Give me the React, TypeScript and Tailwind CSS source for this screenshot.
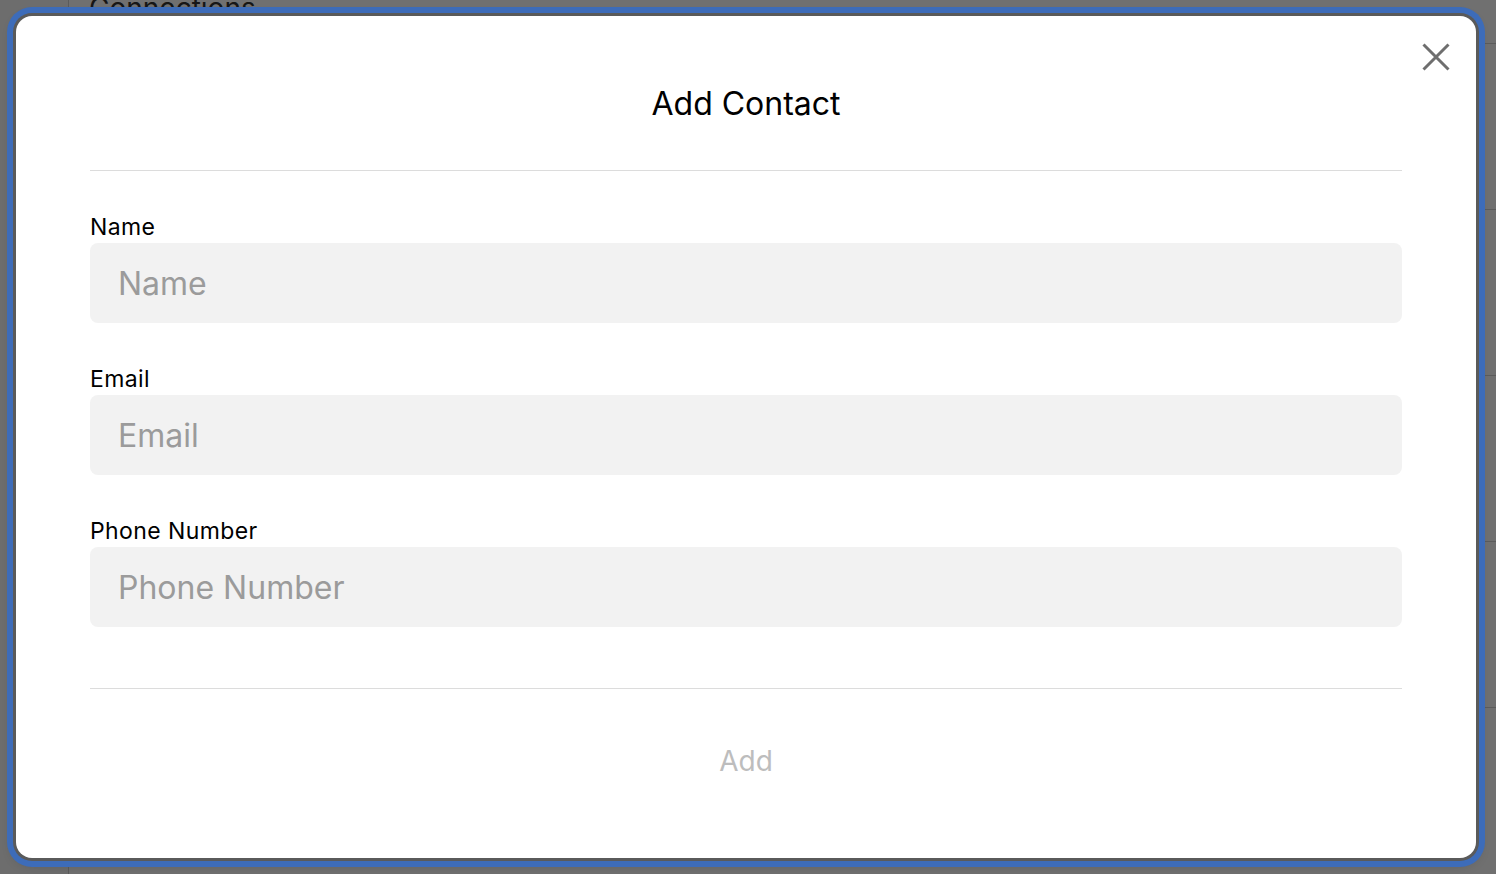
const fields = ['Name', 'Email', 'Phone Number'];

function Field({ label }: { label: string }) {
  return (
    <div className="flex flex-col gap-[5px]">
      <label className="translate-y-[1px] text-[23px] leading-[24px] tracking-[0.4px] text-black">{label}</label>
      <input
        placeholder={label}
        className="h-[80px] w-full rounded-[8px] bg-[#f2f2f2] px-[28px] text-[32px] text-black outline-none placeholder:text-[#9b9b9b]"
      />
    </div>
  );
}

export default function App() {
  return (
    <div
      className="relative h-[874px] w-full overflow-hidden bg-white"
      style={{ fontFamily: 'Inter, "Noto Sans", sans-serif' }}
    >
      {/* page behind the dialog */}
      <div className="flex h-full">
        <aside className="w-[69px] shrink-0 border-r border-[#cfcfcf] bg-[#f8f8f8]" />
        <main className="flex flex-1 flex-col">
          <h1 className="-mt-[13px] ml-[20px] text-[28px] leading-[42px] text-[#333]">Connections</h1>
          <div className="mt-[14px] flex flex-col">
            {[0, 1, 2, 3, 4].map((i) => (
              <div key={i} className="h-[166px] border-t border-[#d2d2d2]" />
            ))}
          </div>
        </main>
      </div>

      {/* overlay */}
      <div className="absolute inset-0 bg-black/[0.56]" />

      {/* dialog */}
      <div className="absolute left-[16px] top-[16px] flex h-[842px] w-[1460px] flex-col rounded-[16px] bg-white px-[74px] shadow-[0_0_0_3px_#5a5a5a,0_0_0_9px_#3d6cb9,0_4px_14px_rgba(0,0,0,0.3)]">
        <button className="absolute right-[26px] top-[27px] flex h-[28px] w-[28px] items-center justify-center text-[#6e6e6e]">
          <svg viewBox="0 0 28 28" className="h-[28px] w-[28px]" fill="none" stroke="currentColor" strokeWidth={3} strokeLinecap="butt">
            <path d="M1.5 1.5 L26.5 26.5 M26.5 1.5 L1.5 26.5" />
          </svg>
        </button>

        <div className="flex h-[155px] items-start justify-center border-b border-[#dcdcdc] pt-[68px]">
          <h2 className="text-[32px] leading-[40px] text-black">Add Contact</h2>
        </div>

        <div className="flex flex-col gap-[43px] pt-[43px]">
          {fields.map((f) => (
            <Field key={f} label={f} />
          ))}
        </div>

        <div className="mt-[61px] border-t border-[#dcdcdc]" />

        <div className="flex justify-center pt-[52px]">
          <button className="h-[40px] text-[28px] leading-[40px] text-[#bdbdbd]">Add</button>
        </div>
      </div>
    </div>
  );
}
